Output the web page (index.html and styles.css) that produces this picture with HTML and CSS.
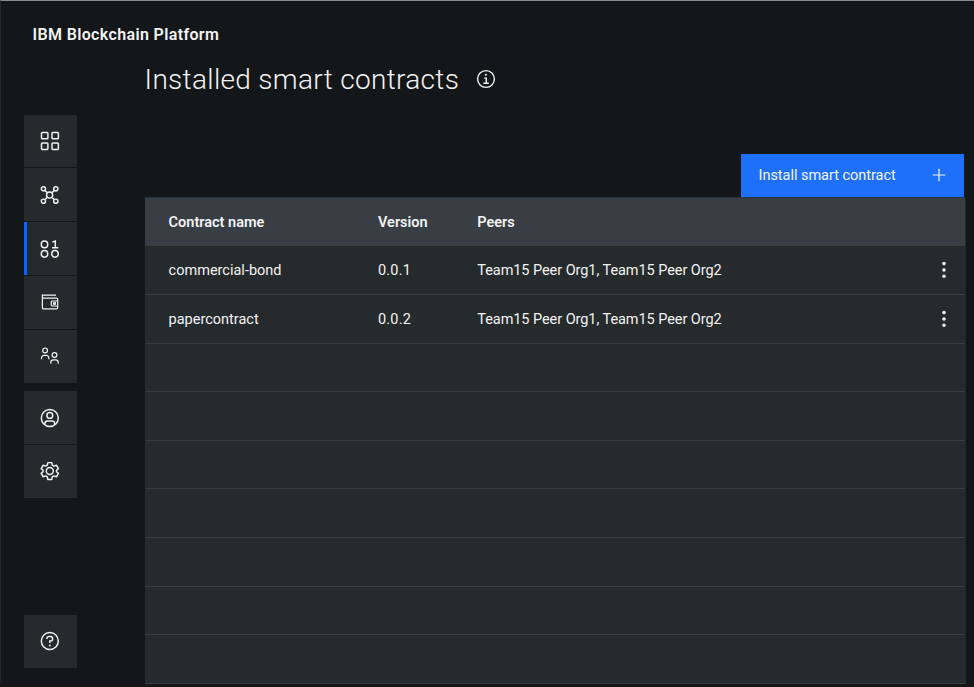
FILE: index.html
```html
<!DOCTYPE html>
<html lang="en">
<head>
<meta charset="utf-8">
<title>IBM Blockchain Platform</title>
<link rel="stylesheet" href="styles.css">
</head>
<body>
<div class="window">
  <header class="topbar"><span class="brand">IBM Blockchain Platform</span></header>
  <nav class="sidebar">
    <a class="tile"><svg class="icon" viewBox="0 0 20 20"><rect x="1.5" y="1.4" width="6.4" height="6.4" rx=".8"/><rect x="12" y="1.4" width="6.4" height="6.4" rx=".8"/><rect x="1.5" y="12" width="6.4" height="6.4" rx=".8"/><rect x="12" y="12" width="6.4" height="6.4" rx=".8"/></svg></a>
    <a class="tile"><svg class="icon" viewBox="0 0 20 20"><circle cx="9.6" cy="10" r="3.1"/><circle cx="3.4" cy="3.8" r="2.1"/><circle cx="15.8" cy="3.8" r="2.1"/><circle cx="3.4" cy="16.2" r="2.1"/><circle cx="15.8" cy="16.2" r="2.1"/><path d="M5 5.4l2.4 2.4M14.2 5.4l-2.4 2.4M5 14.6l2.4-2.4M14.2 14.6l-2.4-2.4"/></svg></a>
    <a class="tile selected"><svg class="icon" viewBox="0 0 20 20"><rect x="1.3" y="2" width="6.4" height="6.8" rx="3.1"/><rect x="1.3" y="11.4" width="6.4" height="6.8" rx="3.1"/><rect x="11.8" y="11.4" width="6.4" height="6.8" rx="3.1"/><path d="M12.3 3.1l3-1.1v6.6M12 8.7h6.3"/></svg></a>
    <a class="tile"><svg class="icon thin" viewBox="0 0 20 20"><path d="M16 3.2H2.4v12.6a1.1 1.1 0 0 0 1.1 1.1h13.1a1.1 1.1 0 0 0 1.1-1.1V7.2a1.1 1.1 0 0 0-1.1-1.1H2.4M17.7 9H12.1a.8.8 0 0 0-.8.8v3.4a.8.8 0 0 0 .8.8h5.6"/><rect x="13.6" y="10.8" width="1.8" height="1.4"/></svg></a>
    <a class="tile"><svg class="icon thin" viewBox="0 0 20 20"><circle cx="5.1" cy="4.4" r="2.4"/><circle cx="14.5" cy="9" r="2.4"/><path d="M1.5 13.2v-1.3a2.6 2.6 0 0 1 2.6-2.6h2.2a2.6 2.6 0 0 1 2.6 2.6v1.3M10.8 17.8v-1.3a2.6 2.6 0 0 1 2.6-2.6h2.2a2.6 2.6 0 0 1 2.6 2.6v1.3"/></svg></a>
    <a class="tile group-start"><svg class="icon" viewBox="0 0 20 20"><circle cx="9.8" cy="10" r="8.5"/><circle cx="9.8" cy="7.4" r="2.9"/><path d="M5 16.5v-1.2a2.4 2.4 0 0 1 2.4-2.4h4.8a2.4 2.4 0 0 1 2.4 2.4v1.2"/></svg></a>
    <a class="tile"><svg class="icon" viewBox="0 0 20 20"><circle cx="9.8" cy="10" r="3.5"/><path stroke-linejoin="round" d="M7.8 1.6h4l.5 2.5 1.7 1 2.4-.9 2 3.4-1.9 1.7v1.4l1.9 1.7-2 3.4-2.4-.9-1.7 1-.5 2.5h-4l-.5-2.5-1.7-1-2.4.9-2-3.4 1.9-1.7V9.3L1.2 7.6l2-3.4 2.4.9 1.7-1z"/></svg></a>
    <a class="tile help"><svg class="icon" viewBox="0 0 20 20"><circle cx="9.8" cy="10" r="8.5"/><path d="M7 8V7.4a1.9 1.9 0 0 1 1.9-1.9h1.7a2 2 0 0 1 2 2v.5a2 2 0 0 1-2 2h-.8v2"/><circle class="dot" cx="9.8" cy="14.5" r=".95"/></svg></a>
  </nav>
  <main class="content">
    <div class="heading">
      <h1 class="title">Installed smart contracts</h1>
      <svg class="info" viewBox="0 0 20 20"><circle cx="10" cy="10" r="8.4"/><path d="M8.1 9.1H10.3v5M7.3 14.2h5.5"/><circle class="dot" cx="9.9" cy="5.8" r="1.05"/></svg>
    </div>
    <button class="install"><span class="install-label">Install smart contract</span><svg class="plus" viewBox="0 0 14 14"><path d="M7 .7v12.6M.7 7h12.6"/></svg></button>
    <div class="table">
      <div class="row head"><span>Contract name</span><span>Version</span><span>Peers</span></div>
      <div class="row"><span>commercial-bond</span><span class="version">0.0.1</span><span class="peers">Team15 Peer Org1, Team15 Peer Org2</span><svg class="more" viewBox="0 0 4 18"><circle cx="2" cy="2.6" r="1.8"/><circle cx="2" cy="9" r="1.8"/><circle cx="2" cy="15.3" r="1.8"/></svg></div>
      <div class="row"><span>papercontract</span><span class="version">0.0.2</span><span class="peers">Team15 Peer Org1, Team15 Peer Org2</span><svg class="more" viewBox="0 0 4 18"><circle cx="2" cy="2.6" r="1.8"/><circle cx="2" cy="9" r="1.8"/><circle cx="2" cy="15.3" r="1.8"/></svg></div>
      <div class="row"></div>
      <div class="row"></div>
      <div class="row"></div>
      <div class="row"></div>
      <div class="row"></div>
      <div class="row"></div>
      <div class="row"></div>
    </div>
  </main>
</div>
</body>
</html>
```
FILE: styles.css
```css
* { box-sizing: border-box; }
html { height: 687px; overflow: hidden; background: #171516; }
body { margin: 0; height: 687px; overflow: hidden; font-family: Roboto, "Noto Sans", sans-serif; color: #f3f3f3; }
.window {
  width: 974px;
  height: 684px;
  display: grid;
  grid-template-columns: 143.6px 1fr;
  grid-template-rows: 56px 1fr;
  background: #13171a;
  border-top: 1px solid #858c8e;
  border-left: 1px solid #24292c;
  border-bottom-left-radius: 4px;
}
.topbar { grid-column: 1 / 3; padding: 23px 0 0 31.5px; }
.brand { display: block; font-size: 16px; line-height: 22px; font-weight: 600; letter-spacing: .36px; white-space: nowrap; }
.sidebar { display: flex; flex-direction: column; align-items: flex-start; gap: 1px; padding: 57.6px 0 16.5px 23.3px; }
.tile { width: 52.8px; height: 52.8px; flex: none; display: flex; align-items: center; padding-left: 15.7px; background: #252a2d; }
.selected { border-left: 3px solid #0f62fe; padding-left: 12.7px; }
.group-start { margin-top: 7.6px; }
.help { margin-top: auto; }
.icon { width: 20px; height: 20px; fill: none; stroke: #f3f3f3; stroke-width: 1.45; }
.thin { stroke-width: 1.2; }
.dot { fill: #f3f3f3; stroke: none; }
.content { display: flex; flex-direction: column; min-width: 0; padding-right: 8.5px; }
.heading { display: flex; align-items: center; height: 44px; gap: 17px; }
.title { margin: 0; width: 314px; padding-top: 2px; font-size: 28px; line-height: 40px; font-weight: 300; letter-spacing: .32px; white-space: nowrap; }
.info { width: 20px; height: 20px; fill: none; stroke: #f3f3f3; stroke-width: 1.4; }
.install {
  align-self: flex-end;
  display: flex; align-items: center; justify-content: space-between;
  width: 223px; height: 43px; margin: 53px 2px 0 0; padding: 0 18px;
  border: 0; background: #1f70f8; color: #f0f4ff;
  font: 400 14.5px/20px Roboto, "Noto Sans", sans-serif;
}
.install-label { white-space: nowrap; padding-top: 1px; letter-spacing: -.03px; }
.plus { width: 14px; height: 14px; margin-bottom: 1px; fill: none; stroke: #f0f4ff; stroke-width: 1.2; }
.table { border-right: 1px solid #1b2a32; }
.row {
  display: grid; grid-template-columns: 209.4px 99.3px 1fr 4px; align-items: center;
  height: 48.6px; padding: 0 19px 0 24px;
  border-bottom: 1px solid #383d41; background: #252a2d;
  font-size: 14.5px; line-height: 20px; white-space: nowrap;
}
.row span { justify-self: start; padding-top: 2px; }
.row .version { letter-spacing: .2px; }
.row .peers { letter-spacing: -.06px; }
.head { height: 49.4px; background: #393d44; font-weight: 600; border-top: 1px solid #26333c; }
.more { width: 4px; height: 18px; fill: #f3f3f3; }
```
